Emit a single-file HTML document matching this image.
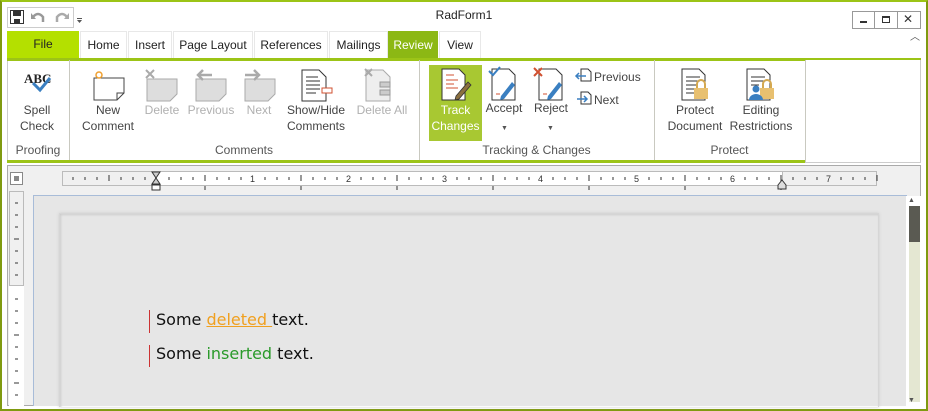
<!DOCTYPE html>
<html><head><meta charset="utf-8"><style>
*{margin:0;padding:0;box-sizing:border-box}
body{width:928px;height:411px;overflow:hidden;background:#fff;font-family:"Liberation Sans",sans-serif;font-size:12px;color:#333;position:relative}
.a{position:absolute}
.lbl{position:absolute;text-align:center;font-size:12px;line-height:16px;color:#444;white-space:nowrap}
.dis{color:#b0b0b0}
.tab{position:absolute;top:31px;height:27px;line-height:26px;background:#fff;border:1px solid #e8e8e8;border-bottom:none;text-align:center;font-size:12px;color:#222}
.gl{position:absolute;top:143px;font-size:12px;color:#555;text-align:center}
.sep{position:absolute;top:60px;width:1px;height:100px;background:#c9c9c0}
</style></head><body>
<div class="a" style="left:0;top:0;width:928px;height:411px;border:2px solid #7f9a10;border-top:2px solid #9cc417"></div>
<div class="a" style="left:7px;top:7px;width:67px;height:21px;border:1px solid #ccc;background:#fff"></div>
<svg class="a" style="left:9px;top:9px" width="80" height="18">
<rect x="1.5" y="1.5" width="13" height="13" fill="#fff" stroke="#333"/><rect x="4" y="2" width="8" height="5" fill="#333"/><rect x="5" y="10" width="6" height="4" fill="#333"/>
<path d="M24 8 q5-6 10 0 v5" fill="none" stroke="#999" stroke-width="2.5"/><path d="M22 4 l0 6 l5 0z" fill="#999"/>
<path d="M58 8 q-5-6-10 0 v5" fill="none" stroke="#aaa" stroke-width="2.5"/><path d="M60 4 l0 6 l-5 0z" fill="#aaa"/>
<path d="M68 11 h5 l-2.5 3z" fill="#555"/><rect x="68" y="9" width="5" height="1" fill="#555"/>
</svg>
<div class="a" style="left:0;top:8px;width:928px;text-align:center;font-size:12px;color:#222">RadForm1</div>
<div class="a" style="left:852px;top:11px;width:69px;height:18px;border:1px solid #999;background:#fff"></div>
<div class="a" style="left:874px;top:11px;width:1px;height:18px;background:#999"></div>
<div class="a" style="left:897px;top:11px;width:1px;height:18px;background:#999"></div>
<div class="a" style="left:860px;top:21px;width:7px;height:2px;background:#333"></div>
<div class="a" style="left:882px;top:16px;width:8px;height:7px;border:1px solid #333;border-top-width:2px"></div>
<div class="a" style="left:903px;top:12px;font-size:12px;color:#333">✕</div>
<div class="a" style="left:910px;top:28px;font-size:10px;color:#555">︿</div>
<div class="a" style="left:7px;top:31px;width:72px;height:28px;background:#b4e000;text-align:center;line-height:27px;color:#222">File</div>
<div class="tab" style="left:80px;width:47px">Home</div>
<div class="tab" style="left:128px;width:44px">Insert</div>
<div class="tab" style="left:173px;width:80px">Page Layout</div>
<div class="tab" style="left:254px;width:74px">References</div>
<div class="tab" style="left:329px;width:59px">Mailings</div>
<div class="tab" style="left:388px;width:50px;background:#8cb814;color:#fff;border-color:#8cb814">Review</div>
<div class="tab" style="left:439px;width:42px">View</div>
<div class="a" style="left:7px;top:58px;width:914px;height:105px;border:1px solid #ccc;border-top:none"></div>
<div class="a" style="left:7px;top:58px;width:798px;height:3px;background:#9cc417"></div>
<div class="a" style="left:805px;top:58px;width:116px;height:2px;background:#9cc417"></div>
<div class="a" style="left:7px;top:160px;width:798px;height:3px;background:#9cc417"></div>
<div class="sep" style="left:69px"></div><div class="sep" style="left:419px"></div><div class="sep" style="left:654px"></div><div class="sep" style="left:805px;height:102px"></div>
<svg class="a" style="left:0;top:60px" width="810" height="80">
<text x="24" y="23" font-family="Liberation Serif" font-weight="bold" font-size="13" fill="#222">ABC</text>
<path d="M33 23 l7 7 l10-12" fill="none" stroke="#3a7fc1" stroke-width="3"/>
<path d="M94 18 h30 v15 l-7 7 h-23z" fill="#fff" stroke="#444"/><path d="M117 40 v-7 h7" fill="none" stroke="#444"/>
<circle cx="99" cy="15" r="3" fill="none" stroke="#f0a030" stroke-width="1.5"/>
<path d="M147 19 h30 v15 l-7 7 h-23z" fill="#ddd" stroke="#aaa"/><path d="M146 10 l8 8 M154 10 l-8 8" stroke="#aaa" stroke-width="2"/>
<path d="M196 19 h30 v15 l-7 7 h-23z" fill="#ddd" stroke="#aaa"/><path d="M212 15 h-14 m5-5 l-5 5 l5 5" fill="none" stroke="#aaa" stroke-width="2.5"/>
<path d="M245 19 h30 v15 l-7 7 h-23z" fill="#ddd" stroke="#aaa"/><path d="M245 15 h14 m-5-5 l5 5 l-5 5" fill="none" stroke="#aaa" stroke-width="2.5"/>
<path d="M302 10 h17 l7 7 v24 h-24z" fill="#fff" stroke="#333"/><path d="M306 17h12M306 21h14M306 25h14M306 29h14M306 33h10" stroke="#333"/>
<rect x="322" y="28" width="10" height="5" fill="#fff" stroke="#d05030"/>
<path d="M366 10 h17 l7 7 v24 h-24z" fill="#eee" stroke="#aaa"/><rect x="380" y="22" width="10" height="5" fill="#ccc" stroke="#999"/><rect x="380" y="30" width="10" height="5" fill="#ccc" stroke="#999"/>
<path d="M365 9 l7 7 M372 9 l-7 7" stroke="#aaa" stroke-width="2"/>
</svg>
<div class="a" style="left:429px;top:65px;width:53px;height:76px;background:#a8c832"></div>
<svg class="a" style="left:420px;top:60px" width="240" height="80">
<path d="M22 9 h17 l6 6 v25 h-23z" fill="#fff" stroke="#333"/><path d="M26 15h8M26 20h12M26 24h8M26 28h12" stroke="#d05030"/>
<path d="M36 36 l12-14 l3 3 l-12 14 l-4 1z" fill="#8a7040" stroke="#333" stroke-width=".8"/>
<path d="M72 9 h17 l6 6 v25 h-23z" fill="#fff" stroke="#333"/><path d="M69 11 l4 4 l7-8" fill="none" stroke="#3a7fc1" stroke-width="2"/>
<path d="M81 36 l11-14 l3 3 l-11 14 l-4 1z" fill="#3a7fc1"/><path d="M76 34h4" stroke="#d05030"/>
<path d="M119 9 h17 l6 6 v25 h-23z" fill="#fff" stroke="#333"/><path d="M114 8 l8 8 M122 8 l-8 8" stroke="#d05030" stroke-width="2"/>
<path d="M128 36 l11-14 l3 3 l-11 14 l-4 1z" fill="#3a7fc1"/><path d="M123 34h4" stroke="#d05030"/>
<path d="M161 9 h7 l3 3 v9 h-10z" fill="#fff" stroke="#333"/><path d="M166 16 h-10 m3-3 l-3 3 l3 3" fill="none" stroke="#3a7fc1" stroke-width="1.5"/>
<path d="M161 32 h7 l3 3 v9 h-10z" fill="#fff" stroke="#333"/><path d="M157 39 h10 m-3-3 l3 3 l-3 3" fill="none" stroke="#3a7fc1" stroke-width="1.5"/>
</svg>
<svg class="a" style="left:660px;top:60px" width="150" height="50">
<path d="M22 9 h17 l6 6 v25 h-23z" fill="#fff" stroke="#333"/><path d="M26 17h14M26 21h14M26 25h10M26 29h10M26 33h10" stroke="#333"/>
<rect x="34" y="28" width="14" height="11" fill="#e8c070"/><path d="M37 28 v-4 a4 4 0 0 1 8 0 v4" fill="none" stroke="#d4a850" stroke-width="2"/>
<path d="M87 9 h17 l6 6 v25 h-23z" fill="#fff" stroke="#333"/><path d="M91 17h14M91 21h14M91 25h8" stroke="#333"/>
<rect x="100" y="28" width="14" height="11" fill="#e8c070"/><path d="M103 28 v-4 a4 4 0 0 1 8 0 v4" fill="none" stroke="#d4a850" stroke-width="2"/>
<circle cx="96" cy="29" r="3.5" fill="#3a7fc1"/><path d="M89 40 a7 6 0 0 1 14 0z" fill="#3a7fc1"/>
</svg>
<div class="lbl" style="left:14px;top:102px;width:46px">Spell<br>Check</div>
<div class="lbl" style="left:80px;top:102px;width:56px">New<br>Comment</div>
<div class="lbl dis" style="left:142px;top:102px;width:40px">Delete</div>
<div class="lbl dis" style="left:186px;top:102px;width:50px">Previous</div>
<div class="lbl dis" style="left:244px;top:102px;width:30px">Next</div>
<div class="lbl" style="left:284px;top:102px;width:64px">Show/Hide<br>Comments</div>
<div class="lbl dis" style="left:355px;top:102px;width:54px">Delete All</div>
<div class="lbl" style="left:429px;top:102px;width:53px;color:#fff">Track<br>Changes</div>
<div class="lbl" style="left:484px;top:100px;width:40px">Accept</div>
<div class="lbl" style="left:532px;top:100px;width:38px">Reject</div>
<div class="a" style="left:501px;top:125px;font-size:7px;color:#555">▼</div>
<div class="a" style="left:547px;top:125px;font-size:7px;color:#555">▼</div>
<div class="lbl" style="left:594px;top:69px">Previous</div>
<div class="lbl" style="left:594px;top:92px">Next</div>
<div class="lbl" style="left:664px;top:102px;width:62px">Protect<br>Document</div>
<div class="lbl" style="left:728px;top:102px;width:66px">Editing<br>Restrictions</div>
<div class="gl" style="left:7px;width:62px">Proofing</div>
<div class="gl" style="left:69px;width:350px">Comments</div>
<div class="gl" style="left:419px;width:235px">Tracking &amp; Changes</div>
<div class="gl" style="left:654px;width:151px">Protect</div>
<div class="a" style="left:7px;top:165px;width:914px;height:241px;background:#f0f0f0;border:1px solid #aaa"></div>
<div class="a" style="left:10px;top:172px;width:13px;height:13px;border:1px solid #888;background:#fff"></div>
<div class="a" style="left:14px;top:176px;width:5px;height:5px;background:#888"></div>
<div class="a" style="left:62px;top:171px;width:815px;height:15px;background:#fff;border:1px solid #bbb"></div>
<div class="a" style="left:62px;top:171px;width:94px;height:15px;background:#f0f0f0;border:1px solid #bbb"></div>
<div class="a" style="left:782px;top:171px;width:95px;height:15px;background:#f0f0f0;border:1px solid #bbb"></div>
<svg class="a" style="left:62px;top:171px" width="816" height="20" font-family="Liberation Sans" font-size="9">
<g stroke="#333">
<path d="M11 6v3M23 6v3M35 6v3M47 4v6M59 6v3M71 6v3M83 6v3M107 6v3M119 6v3M131 6v3M143 4v6M155 6v3M167 6v3M179 6v3M203 6v3M215 6v3M227 6v3M239 4v6M251 6v3M263 6v3M275 6v3M299 6v3M311 6v3M323 6v3M335 4v6M347 6v3M359 6v3M371 6v3M395 6v3M407 6v3M419 6v3M431 4v6M443 6v3M455 6v3M467 6v3M491 6v3M503 6v3M515 6v3M527 4v6M539 6v3M551 6v3M563 6v3M587 6v3M599 6v3M611 6v3M623 4v6M635 6v3M647 6v3M659 6v3M683 6v3M695 6v3M707 6v3M719 4v6M731 6v3M743 6v3M755 6v3M779 6v3M791 6v3M803 6v3M815 4v6"/>
<path d="M143 15v4M239 15v4M335 15v4M431 15v4M527 15v4M623 15v4M719 15v4"/>
</g>
<text x="188" y="11" fill="#333">1</text><text x="284" y="11" fill="#333">2</text><text x="380" y="11" fill="#333">3</text><text x="476" y="11" fill="#333">4</text><text x="572" y="11" fill="#333">5</text><text x="668" y="11" fill="#333">6</text><text x="764" y="11" fill="#333">7</text>
<path d="M90 1h8l-4 6z M90 13h8l-4-6z" fill="#ccc" stroke="#333"/><rect x="90" y="14" width="8" height="5" fill="#fff" stroke="#333"/>
<path d="M716 14 l4-5 l4 5 v4 h-8z" fill="#ddd" stroke="#333"/>
</svg>
<div class="a" style="left:9px;top:191px;width:15px;height:95px;border:1px solid #bbb;background:#f0f0f0"></div>
<div class="a" style="left:9px;top:286px;width:15px;height:120px;background:#fff"></div>
<svg class="a" style="left:9px;top:191px" width="15" height="215"><g stroke="#333">
<path d="M6 12h3M6 24h3M6 36h3M5 48h5M6 60h3M6 72h3M6 84h3M6 108h3M6 120h3M6 132h3M5 144h5M6 156h3M6 168h3M6 180h3M5 192h5M6 204h3"/></g></svg>
<div class="a" style="left:33px;top:195px;width:874px;height:211px;background:#e6e6e6;border:1px solid #a8bcd8;border-bottom:none"></div>
<div class="a" style="left:59px;top:213px;width:820px;height:194px;border:1px solid #d6d6d6;border-bottom:none;box-shadow:0 0 3px #ccc,inset 1px 1px 2px #ccc"></div>
<div class="a" style="left:906px;top:196px;width:15px;height:210px;background:#fff"></div>
<div class="a" style="left:909px;top:206px;width:11px;height:196px;background:#e4e7d2"></div>
<div class="a" style="left:909px;top:206px;width:11px;height:36px;background:#5a5a52"></div>
<div class="a" style="left:908px;top:197px;font-size:7px;color:#555">▲</div>
<div class="a" style="left:908px;top:397px;font-size:7px;color:#555">▼</div>
<div class="a" style="left:149px;top:310px;width:1px;height:23px;background:#c33"></div>
<div class="a" style="left:149px;top:345px;width:1px;height:22px;background:#c33"></div>
<div class="a" style="left:156px;top:310px;font-size:16px;line-height:20px;color:#111;font-family:'DejaVu Sans',sans-serif">Some <span style="color:#f0a020;text-decoration:underline">deleted </span>text.</div>
<div class="a" style="left:156px;top:344px;font-size:16px;line-height:20px;color:#111;font-family:'DejaVu Sans',sans-serif">Some <span style="color:#2a9a2a">inserted</span> text.</div>
</body></html>
